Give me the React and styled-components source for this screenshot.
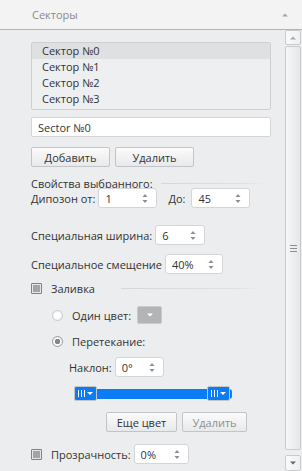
import React from 'react'
import styled, { createGlobalStyle } from 'styled-components'

const Global = createGlobalStyle`
  html, body { margin: 0; padding: 0; }
  body {
    font-family: "Open Sans", "Noto Sans", sans-serif;
    font-size: 11px;
    color: #333;
    background: #ebedef;
  }
`;

const Panel = styled.div`
  width: 302px;
  height: 471px;
  display: flex;
  flex-direction: column;
  overflow: hidden;
  background: #ebedef;
`;

const Header = styled.div`
  height: 29px;
  flex: none;
  display: flex;
  align-items: center;
  justify-content: space-between;
  padding: 0 14px 0 32px;
  background: #f3f3f4;
  border-bottom: 1px solid #b4b4b4;
  color: #8a8a8a;
  font-size: 11px;
`;

const Body = styled.div`
  flex: 1;
  display: flex;
  min-height: 0;
`;

const Content = styled.div`
  flex: 1;
  padding: 12px 14px 0 31px;
  display: flex;
  flex-direction: column;
`;

const List = styled.div`
  border: 1px solid #cdcfd2;
  border-radius: 2px;
  background: #eeeff1;
  padding: 0 0 2px;
`;

const Item = styled.div`
  height: 16px;
  line-height: 16px;
  padding-left: 10px;
  background: ${p => (p.$selected ? '#dfe0e2' : 'transparent')};
  color: #333;
`;

const TextInput = styled.div`
  margin-top: 7px;
  height: 18px;
  border: 1px solid #d3d5d8;
  border-radius: 2px;
  background: #fff;
  padding-left: 6px;
  display: flex;
  align-items: center;
`;

const Row = styled.div`
  display: flex;
  align-items: center;
  gap: ${p => p.$gap || 0}px;
  margin-top: ${p => p.$mt || 0}px;
  padding-left: ${p => p.$indent || 0}px;
  height: ${p => p.$h || 20}px;
`;

const Button = styled.div`
  width: ${p => p.$w}px;
  height: 18px;
  border: 1px solid #c2c4c7;
  border-radius: 2px;
  background: linear-gradient(#fbfbfb, #e8e9eb);
  display: flex;
  align-items: center;
  justify-content: center;
  color: ${p => (p.$disabled ? '#8d8f92' : '#333')};
  box-sizing: content-box;
`;

const Label = styled.span`
  white-space: nowrap;
  margin-left: ${p => p.$ml || 0}px;
  margin-right: ${p => p.$mr || 0}px;
`;

const Rule = styled.div`
  flex: 1;
  height: 1px;
  margin-left: ${p => p.$ml || 0}px;
  margin-right: 6px;
  background: linear-gradient(90deg, #d4d6d9, #dfe1e3 80%, transparent);
`;

const SpinBox = styled.div`
  width: ${p => p.$w}px;
  height: 20px;
  border: 1px solid #d3d5d8;
  border-radius: 3px;
  background: #fff;
  display: flex;
  align-items: center;
  justify-content: space-between;
  padding: 0 8px 0 6px;
  box-sizing: border-box;
`;

const Check = styled.div`
  width: 9px;
  height: 9px;
  border: 1px solid #808285;
  border-radius: 1px;
  background: #a2a4a7;
  box-shadow: inset 0 0 0 1px #e6e7e9;
  margin-right: 9px;
  flex: none;
`;

const Radio = styled.div`
  width: 9px;
  height: 9px;
  border-radius: 50%;
  border: 1px solid ${p => (p.$on ? '#9a9ca0' : '#c9cbce')};
  background: ${p => (p.$on ? 'radial-gradient(circle, #85878a 0 2.5px, #fff 3px)' : '#fff')};
  box-shadow: inset 0 0 0 1px #f0f0f0;
  margin-right: 9px;
  flex: none;
`;

const ColorButton = styled.div`
  width: 23px;
  height: 16px;
  border: 1px solid #c8cacd;
  border-radius: 2px;
  background: #b3b4b6;
  display: flex;
  align-items: center;
  justify-content: center;
  margin-left: 6px;
`;

const Slider = styled.div`
  margin-top: 9px;
  margin-left: 43px;
  width: 160px;
  height: 15px;
  position: relative;
  display: flex;
  align-items: center;
`;

const Track = styled.div`
  width: 158px;
  height: 10px;
  border-radius: 0 3px 3px 0;
  background: #0c7cf5;
`;

const Thumb = styled.div`
  position: absolute;
  top: 0;
  left: ${p => p.$x}px;
  width: 21px;
  height: 13px;
  border: 1px solid #c3c6ca;
  border-radius: 2px;
  background: #0c7cf5;
  display: flex;
  align-items: center;
  justify-content: center;
`;

const Scrollbar = styled.div`
  width: 16px;
  flex: none;
  display: flex;
  flex-direction: column;
  background: #eceef0;
  margin-right: 1px;
`;

const ScrollBtn = styled.div`
  height: ${p => p.$h || 15}px;
  border: 1px solid #c9cbce;
  border-radius: 2px;
  background: linear-gradient(90deg, #fafafa, #eeeff0);
  display: flex;
  align-items: center;
  justify-content: center;
  box-sizing: border-box;
`;

const ScrollThumb = styled.div`
  flex: 1;
  margin: 1px 0 5px;
  border: 1px solid #c9cbce;
  border-radius: 2px;
  background: linear-gradient(90deg, #f6f6f7, #e6e7e9);
  display: flex;
  align-items: center;
  justify-content: center;
`;

const Tri = ({ down, color = '#9a9a9a', w = 6 }) => (
  <svg width={w} height={w / 2 + 1} viewBox="0 0 6 4">
    {down ? <path d="M0 0.5h6L3 3.5z" fill={color} /> : <path d="M0 3.5h6L3 0.5z" fill={color} />}
  </svg>
);

const Arrows = () => (
  <svg width="6" height="11" viewBox="0 0 6 11">
    <path d="M0.5 4h5L3 1z" fill="#8c8e91" />
    <path d="M0.5 7h5L3 10z" fill="#8c8e91" />
  </svg>
);

const Spin = ({ value, w }) => (
  <SpinBox $w={w}>
    <span>{value}</span>
    <Arrows />
  </SpinBox>
);

const Grip = () => (
  <svg width="17" height="7" viewBox="0 0 17 7">
    <rect x="1" y="0" width="1" height="7" fill="#fff" />
    <rect x="4" y="0" width="1" height="7" fill="#fff" />
    <rect x="7" y="0" width="1" height="7" fill="#fff" />
    <path d="M10 2h6l-3 3z" fill="#fff" />
  </svg>
);

export default function App() {
  return (
    <>
      <Global />
      <Panel>
        <Header>
          <span>Секторы</span>
          <Tri color="#a8a8a8" w={6} />
        </Header>
        <Body>
          <Content>
            <List>
              <Item $selected>Сектор №0</Item>
              <Item>Сектор №1</Item>
              <Item>Сектор №2</Item>
              <Item>Сектор №3</Item>
            </List>
            <TextInput>Sector №0</TextInput>
            <Row $mt={10} $gap={5}>
              <Button $w={77}>Добавить</Button>
              <Button $w={77}>Удалить</Button>
            </Row>
            <Row $mt={8} $h={16}>
              <Label>Свойства выбранного:</Label>
              <Rule $ml={8} />
            </Row>
            <Row $mt={-3}>
              <Label $mr={3}>Дипозон от:</Label>
              <Spin value="1" w={59} />
              <Label $ml={11} $mr={6}>До:</Label>
              <Spin value="45" w={59} />
            </Row>
            <Row $mt={17}>
              <Label $mr={3}>Специальная ширина:</Label>
              <Spin value="6" w={50} />
            </Row>
            <Row $mt={9}>
              <Label $mr={3}>Специальное смещение</Label>
              <Spin value="40%" w={58} />
            </Row>
            <Row $mt={4} $h={20}>
              <Check />
              <Label>Заливка</Label>
              <Rule $ml={26} />
            </Row>
            <Row $mt={7} $indent={21}>
              <Radio />
              <Label>Один цвет:</Label>
              <ColorButton>
                <Tri down color="#fff" w={6} />
              </ColorButton>
            </Row>
            <Row $mt={6} $indent={21}>
              <Radio $on />
              <Label>Перетекание:</Label>
            </Row>
            <Row $mt={6} $indent={38}>
              <Label $mr={3}>Наклон:</Label>
              <Spin value="0°" w={49} />
            </Row>
            <Slider>
              <Track />
              <Thumb $x={0}>
                <Grip />
              </Thumb>
              <Thumb $x={133}>
                <Grip />
              </Thumb>
            </Slider>
            <Row $mt={11} $gap={5} $indent={75}>
              <Button $w={69}>Еще цвет</Button>
              <Button $w={63} $disabled>Удалить</Button>
            </Row>
            <Row $mt={12}>
              <Check />
              <Label $mr={3}>Прозрачность:</Label>
              <Spin value="0%" w={55} />
            </Row>
          </Content>
          <Scrollbar>
            <ScrollBtn>
              <Tri color="#a8a8a8" w={6} />
            </ScrollBtn>
            <ScrollThumb>
              <svg width="7" height="7" viewBox="0 0 7 7">
                <rect x="0" y="0" width="7" height="1" fill="#8c8e91" />
                <rect x="0" y="3" width="7" height="1" fill="#8c8e91" />
                <rect x="0" y="6" width="7" height="1" fill="#8c8e91" />
              </svg>
            </ScrollThumb>
            <ScrollBtn $h={16}>
              <Tri down color="#666" w={6} />
            </ScrollBtn>
          </Scrollbar>
        </Body>
      </Panel>
    </>
  )
}
